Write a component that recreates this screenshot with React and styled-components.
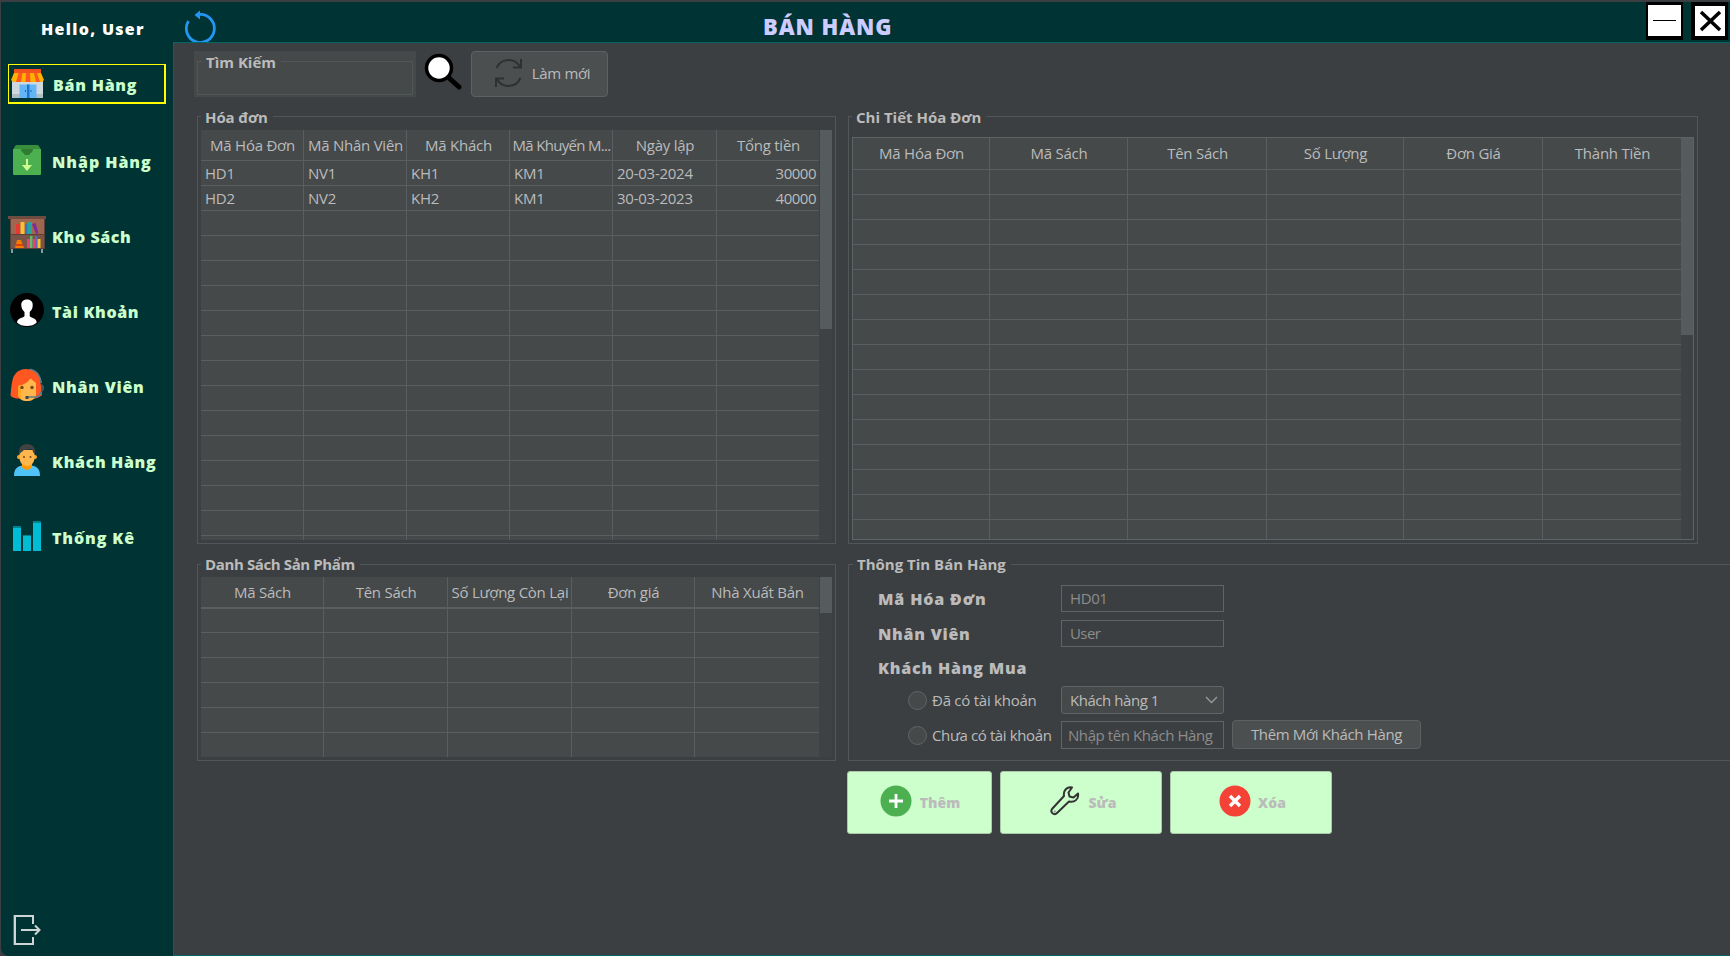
import React from "react";
import styled, { createGlobalStyle } from "styled-components";

const Global = createGlobalStyle`
  * { box-sizing: border-box; }
  body { margin: 0; background: #3c3f41; overflow: hidden; }
`;

const Window = styled.div`
  display: flex;
  width: 1730px;
  height: 956px;
  padding: 2px 0 0 1px;
  overflow: hidden;
  background: #3c3f41;
  color: #bbbbbb;
  font: 15px/20px "Open Sans", "Noto Sans", sans-serif;
`;

/* ---------- text ---------- */
const Text = styled.span`
  white-space: nowrap;
  letter-spacing: ${(p) => p.$ls || 0}px;
`;

const Heavy = styled(Text)`
  font-size: ${(p) => p.$size || 16}px;
  font-weight: 800;
`;

/* ---------- sidebar ---------- */
const Sidebar = styled.nav`
  display: flex;
  flex-direction: column;
  width: 172px;
  flex: none;
  padding: 0 6px 10px 7px;
  background: #003333;
  border-bottom-left-radius: 8px;
`;

const Greeting = styled(Heavy)`
  margin: 17px 0 25px 33px;
  color: #ffffff;
`;

const MenuItem = styled.a`
  display: flex;
  align-items: center;
  width: 158px;
  height: 40px;
  margin-bottom: ${(p) => (p.$active ? 37 : 35)}px;
  border: solid ${(p) => (p.$active ? "#ffff00" : "transparent")};
  border-width: 1px 2px 2px 1px;
  color: #ccffcc;

  &:nth-of-type(6) { margin-bottom: 36px; }
`;

const MenuLabel = styled(Heavy)`
  padding-top: 2px;
`;

const MenuIcon = styled.span`
  display: flex;
  justify-content: center;
  width: 38px;
  margin: 0 6px ${(p) => (p.$active ? 0 : 2)}px ${(p) => (p.$active ? 0 : -1)}px;
  flex: none;
  svg { display: block; flex: none; }
`;

const ExitButton = styled.a`
  margin: auto 0 0 4px;
  height: 32px;
  svg { display: block; }
`;

/* ---------- main ---------- */
const Main = styled.div`
  display: flex;
  flex-direction: column;
  flex: 1;
  min-width: 0;
`;

const Header = styled.header`
  display: flex;
  align-items: flex-start;
  height: 40px;
  padding: 0 2px 0 11px;
  background: #003333;
  overflow: hidden;
`;

const ReloadButton = styled.a`
  padding-top: 7px;
  svg { display: block; }
`;

const PageTitle = styled(Heavy)`
  margin: 9px auto 0 545px;
  line-height: 30px;
  color: #ccccff;
`;

const WindowButton = styled.button`
  width: 37px;
  height: 38px;
  margin-left: 8px;
  padding: 0;
  background: #ffffff;
  border: solid #000000;
  border-width: ${(p) => p.$edges};
  svg { display: block; }
`;

const Content = styled.main`
  flex: 1;
  padding: 8px 0 0 20px;
  border: solid #006666;
  border-width: 1px 0 1px 1px;
  overflow: hidden;
`;

const Toolbar = styled.div`
  display: flex;
  height: 46px;
`;

const SearchPanel = styled.div`
  width: 222px;
  height: 46px;
  padding: 0 3px 2px;
  background: #45494a;
`;

const Magnifier = styled.span`
  width: 39px;
  margin: 1px 8px 0 8px;
  svg { display: block; }
`;

const Group = styled.fieldset`
  min-width: 0;
  height: ${(p) => p.$h};
  width: ${(p) => p.$w || "auto"};
  margin: 0;
  padding: ${(p) => p.$pad || "0"};
  border: 1px solid #515658;
  overflow: visible;
`;

const Legend = styled.legend`
  height: 21px;
  margin-left: ${(p) => (p.$inset ? 0 : 4)}px;
  padding: ${(p) => (p.$low ? 2 : 1)}px 5px 0 4px;
  font-weight: 700;
  line-height: 18px;
  white-space: nowrap;
  letter-spacing: ${(p) => p.$ls || 0}px;
`;

const Button = styled.button`
  display: flex;
  align-items: center;
  justify-content: center;
  width: ${(p) => p.$w}px;
  height: ${(p) => p.$h}px;
  padding: 0 0 2px ${(p) => p.$shift || 0}px;
  gap: 10px;
  background: #4c4f50;
  border: 1px solid #5e6162;
  border-radius: 4px;
  color: #bbbbbb;
  font: inherit;
`;

const Panels = styled.div`
  display: grid;
  grid-template-columns: 639px 850px;
  grid-template-rows: 438px 207px;
  gap: 10px 12px;
  margin: 9px 0 0 3px;
`;

/* ---------- table ---------- */
const TableBox = styled.div`
  display: flex;
  height: ${(p) => p.$h}px;
  border: ${(p) => (p.$framed ? "1px solid #5e6364" : "0")};
  background: #45494a;
  overflow: hidden;
`;

const Grid = styled.div`
  display: grid;
  grid-template-columns: ${(p) => p.$cols.map((c) => c + "px").join(" ")};
  grid-template-rows: ${(p) => p.$head}px ${(p) => p.$first}px;
  grid-auto-rows: 25px;
  align-content: start;
`;

const Cell = styled.div`
  display: flex;
  align-items: center;
  justify-content: ${(p) => (p.$align === "right" ? "flex-end" : "flex-start")};
  padding: 0 3px 0 4px;
  border-right: ${(p) => (p.$last ? "0" : "1px solid #5a5e60")};
  border-bottom: 1px solid #5a5e60;
  overflow: hidden;
`;

const HeadCell = styled(Cell)`
  justify-content: center;
  padding: 0 0 ${(p) => (p.$raised ? 2 : 0)}px 1px;
  border-bottom-width: ${(p) => (p.$thick ? 2 : 1)}px;
`;

const Track = styled.div`
  width: 13px;
  flex: none;
  padding-left: ${(p) => (p.$inset ? 1 : 0)}px;
  background: #3f4244;
`;

const Thumb = styled.div`
  height: ${(p) => p.$h}px;
  background: #565b5e;
`;

/* ---------- form ---------- */
const Form = styled.div`
  display: grid;
  grid-template-columns: 183px 171px 189px;
  grid-template-rows: 27px 35px 31px 36px 35px;
  align-items: end;
  margin: 10px 0 0 29px;
`;

const FormLabel = styled(Heavy)`
  padding-bottom: ${(p) => (p.$low ? 0 : 3)}px;
`;

const Field = styled.div`
  display: flex;
  align-items: center;
  justify-content: space-between;
  width: 163px;
  height: ${(p) => p.$h || 27}px;
  padding: 0 8px 1px ${(p) => p.$pl || 8}px;
  border: 1px solid #616465;
  border-radius: ${(p) => (p.$select ? 3 : 0)}px;
  color: ${(p) => (p.$select ? "#bbbbbb" : "#8c8c8c")};
  background: ${(p) => (p.$select ? "#45494a" : "transparent")};
  svg { margin-right: -3px; }
`;

const RadioRow = styled.label`
  display: flex;
  align-items: center;
  height: 28px;
  padding-left: 30px;
  gap: 5px;
`;

const Radio = styled.span`
  width: 19px;
  height: 19px;
  flex: none;
  border: 1px solid #616465;
  border-radius: 50%;
  background: #45494a;
`;

const Actions = styled.div`
  display: flex;
  gap: 8px;
  margin: 10px 0 0 653px;
`;

const ActionButton = styled(Button)`
  gap: ${(p) => p.$gap}px;
  padding-bottom: 0;
  background: #ccffcc;
  border-color: #a8c8a8;
  border-radius: 3px;
  svg { flex: none; margin-bottom: 3px; }
`;

/* ---------- icons ---------- */
const StoreIcon = () => (
  <svg width="34" height="30" viewBox="0 0 34 30">
    <path d="M1 12h31v17H1z" fill="#cfd8dc" />
    <path d="M1 25h31v4H1z" fill="#b0bec5" />
    <path d="M8.500 15.500h17V29h-17z" fill="#64b5f6" />
    <path d="M16 15.500h2.500V29H16z" fill="#1976d2" />
    <path d="M14 21h1v2h-1zM19.500 21h1v2h-1z" fill="#1565c0" />
    <path d="M3 0h27v4H3z" fill="#f4511e" />
    <path d="M3 4h27l3 7-2 2H2l-2-2z" fill="#ffb300" />
    <path d="M7.500 4h4L10 13H5zM15 4h4l.5 9h-5zM23 4h3l3 9h-4z" fill="#ff5722" />
  </svg>
);

const BoxIcon = () => (
  <svg width="30" height="30" viewBox="0 0 30 30">
    <path d="M3 1Q4 0 5 0h20q1 0 2 1l2 4H1z" fill="#388e3c" />
    <path d="M1 4h28v25q0 1-1 1H2q-1 0-1-1z" fill="#4caf50" />
    <path d="M9 4h12q0 3-1.500 3.500Q18 8 17.500 9.500q-2.500 1-5 0Q12 8 10.500 7.500 9 7 9 4z" fill="#2e7d32" />
    <path d="M14 14h2v6h4l-5 6-5-6h4z" fill="#ccff90" />
  </svg>
);

const ShelfIcon = () => (
  <svg width="38" height="38" viewBox="0 0 38 38">
    <path d="M4 33v4M34 33v4" stroke="#b0bec5" strokeWidth="1.500" />
    <path d="M2 2h35v31H2z" fill="#5d4037" />
    <path d="M3 3h33v15H3z" fill="#a1664f" />
    <path d="M3 19h33v13H3z" fill="#795548" />
    <path d="M0 0h38v3H0z" fill="#6d4c41" />
    <path d="M8 8h4v10H8z" fill="#e53935" />
    <path d="M12.500 6h4v12h-4z" fill="#fbc02d" />
    <path d="M17 8h2.500v10H17z" fill="#3f6fc0" />
    <path d="M19.500 6H24v12h-4.500z" fill="#26a69a" />
    <path d="M24 8l3.500-1 3 10-2.500 1z" fill="#7b2f9b" />
    <path d="M9 24h4l3 8H7z" fill="#f57c00" />
    <path d="M8 28h7v2H8z" fill="#d84315" />
    <path d="M19 23h3v9h-3zM25 23h2v9h-2z" fill="#ec407a" />
    <path d="M22 20h2.500v12H22z" fill="#66bb6a" />
    <path d="M27 20h2v12h-2z" fill="#5c6bc0" />
    <path d="M29.500 23h3v9h-3z" fill="#fbc02d" />
  </svg>
);

const AccountIcon = () => (
  <svg width="34" height="34" viewBox="0 0 34 34">
    <circle cx="17" cy="17" r="17" fill="#000" />
    <path d="M17 6.500c4 0 6 2.500 5.700 6 0 3.500-1.500 5-3 6.500v4c1 2 7 2 7 6.500-2 2.500-6 3.500-9.700 3.500S9 32 7 29.500c0-4.500 6.500-4.500 7.500-6.500v-4c-1.500-1.500-3-3-3.200-6.500-.3-3.500 1.700-6 5.700-6z" fill="#fff" />
  </svg>
);

const AgentIcon = () => (
  <svg width="34" height="34" viewBox="0 0 34 34">
    <path d="M16 1C8 1 4 6 2.500 12 1 18 1 23 .5 27c0 1.500 2 2.500 6 3.500h19c3-1 6-2.500 6.500-3.500L30 10C28 4 22 1 16 1z" fill="#ff5722" />
    <path d="M20 1.200c6 .8 10 5.800 11.500 14" stroke="#607d8b" strokeWidth="1.500" fill="none" />
    <path d="M8 18c6-1 10-4 12.500-7.500L26 15v12c-1 4-4 6-9 6s-8-2-9-6z" fill="#ffb74d" />
    <path d="M8 18l3-1v14l-3-3z" fill="#ffa726" />
    <circle cx="12" cy="19.500" r="1.700" fill="#784719" />
    <circle cx="22" cy="19.500" r="1.700" fill="#784719" />
    <path d="M31 16q3 .5 3 4t-3 4z" fill="#455a64" />
    <path d="M31 24c-1 4-3 5-6 5h-8" stroke="#607d8b" strokeWidth="1.400" fill="none" />
    <path d="M15.500 28h3v3h-3z" fill="#37474f" />
  </svg>
);

const CustomerIcon = () => (
  <svg width="26" height="32" viewBox="0 0 26 32">
    <path d="M0 32c0-7 3-9.500 8-10.500h10c5 1 8 3.500 8 10.500z" fill="#4fc3f7" />
    <path d="M8 20h10v3q-2 3-5 3t-5-3z" fill="#ff9800" />
    <circle cx="5" cy="13" r="2" fill="#ffa726" />
    <circle cx="21" cy="13" r="2" fill="#ffa726" />
    <path d="M5.500 6h15v8c0 5-4 8-7.500 8s-7.500-3-7.500-8z" fill="#ffb74d" />
    <path d="M5 10C4 4 8 0 13 0c6 0 9 4 8 10l-1.500-1-1.500-4-8 1-3.500 3z" fill="#424242" />
    <circle cx="10" cy="13" r="1" fill="#784719" />
    <circle cx="16.500" cy="13" r="1" fill="#784719" />
  </svg>
);

const ChartIcon = () => (
  <svg width="30" height="30" viewBox="0 0 30 30">
    <path d="M1 6h8v24H1zM11 15h8v15h-8zM21 1h8v29h-8z" fill="#00bcd4" />
    <path d="M1 5h8v2H1zM11 14h8v1h-8zM21 0h8v2h-8z" fill="#00838f" />
  </svg>
);

const ExitIcon = () => (
  <svg width="30" height="32" viewBox="0 0 30 32" fill="none" stroke="#cfd4d4">
    <path d="M21 10V2H3v28h18v-7" strokeWidth="2" />
    <path d="M1.500 1v30" stroke="#4b6b6b" />
    <path d="M9 16h18" strokeWidth="2" />
    <path d="M23 11.500l4.500 4.500-4.500 4.500" strokeWidth="2" />
  </svg>
);

const ReloadIcon = () => (
  <svg width="34" height="34" viewBox="0 0 34 34">
    <path d="M4.500 12A14 14 0 1 0 15.500 5.500" stroke="#2196f3" strokeWidth="2.800" fill="none" />
    <path d="M10.500 6l5.500-4.500v9z" fill="#2196f3" />
  </svg>
);

const SearchIcon = () => (
  <svg width="40" height="40" viewBox="0 0 40 40">
    <path d="M24 25l11 10" stroke="#000" strokeWidth="5" strokeLinecap="round" />
    <circle cx="15" cy="16" r="12.500" fill="#fff" stroke="#000" strokeWidth="3.500" />
  </svg>
);

const SyncIcon = () => (
  <svg width="27" height="30" viewBox="0 0 27 30" fill="none" stroke="#2e3031" strokeWidth="2">
    <path d="M1.500 10C6 0 20-1 25 9M25.500 20C21 30 7 31 2 21" />
    <path d="M26 1v8.500h-8M1 29v-8.500h8" />
  </svg>
);

const ChevronIcon = () => (
  <svg width="13" height="8" viewBox="0 0 13 8" fill="none" stroke="#9a9da0" strokeWidth="1.300">
    <path d="M1 1l5.500 5.500L12 1" />
  </svg>
);

const AddIcon = () => (
  <svg width="32" height="32" viewBox="0 0 32 32">
    <circle cx="16" cy="16" r="15.500" fill="#4caf50" />
    <path d="M16 9v14M9 16h14" stroke="#fff" strokeWidth="2.800" />
  </svg>
);

const WrenchIcon = () => (
  <svg width="30" height="30" viewBox="0 0 30 30" fill="none" stroke="#333" strokeWidth="2" strokeLinejoin="round">
    <path d="M22 1.500c-5-1-9 3-8 8.500L2 23c-2 3 1.500 6.500 4.500 4.500L19 15.500c5.500 1.500 10-2.500 9-8l-4.500 4-4-1-1-4z" />
    <path d="M4.500 25.500h.8" />
  </svg>
);

const DeleteIcon = () => (
  <svg width="32" height="32" viewBox="0 0 32 32">
    <circle cx="16" cy="16" r="15.500" fill="#f44336" />
    <path d="M11 11l10 10M21 11L11 21" stroke="#fff" strokeWidth="3.400" />
  </svg>
);

/* ---------- data: label, icon, letter spacing ---------- */
const MENU = [
  ["Bán Hàng", StoreIcon, 0.75],
  ["Nhập Hàng", BoxIcon, 0.95],
  ["Kho Sách", ShelfIcon, 0.6],
  ["Tài Khoản", AccountIcon, 0.65],
  ["Nhân Viên", AgentIcon, 0.75],
  ["Khách Hàng", CustomerIcon, 0.65],
  ["Thống Kê", ChartIcon, 0.9],
];

function Table({ cols, head, headHeight, firstRow = 25, rows = [], count, height, thumb, framed }) {
  const cells = [];
  for (let r = 0; r < count; r++) {
    cols.forEach((_, c) => {
      const last = c === cols.length - 1;
      cells.push(
        <Cell key={r + "-" + c} $last={last} $align={last ? "right" : "left"}>
          {rows[r] && <Text $ls={last ? -0.5 : -0.25}>{rows[r][c]}</Text>}
        </Cell>
      );
    });
  }
  return (
    <TableBox $h={height} $framed={framed}>
      <Grid $cols={cols} $head={headHeight} $first={firstRow}>
        {head.map((h, i) => (
          <HeadCell key={h} $last={i === cols.length - 1} $raised={framed} $thick={firstRow < 25}>
            <Text $ls={h.endsWith("...") ? -0.7 : -0.25}>{h}</Text>
          </HeadCell>
        ))}
        {cells}
      </Grid>
      <Track $inset={!framed}>
        <Thumb $h={thumb} />
      </Track>
    </TableBox>
  );
}

export default function App() {
  return (
    <Window>
      <Global />
      <Sidebar>
        <Greeting $ls={1.3}>Hello, User</Greeting>
        {MENU.map(([label, Icon, ls], i) => (
          <MenuItem key={label} $active={i === 0}>
            <MenuIcon $active={i === 0}><Icon /></MenuIcon>
            <MenuLabel $ls={ls}>{label}</MenuLabel>
          </MenuItem>
        ))}
        <ExitButton><ExitIcon /></ExitButton>
      </Sidebar>
      <Main>
        <Header>
          <ReloadButton><ReloadIcon /></ReloadButton>
          <PageTitle $size={22} $ls={0.9}>BÁN HÀNG</PageTitle>
          <WindowButton $edges="3px 2px 4px 2px">
            <svg width="33" height="31" viewBox="0 0 33 31"><path d="M5 15h23v1H5z" fill="#000" /></svg>
          </WindowButton>
          <WindowButton $edges="4px 3px 4px 4px">
            <svg width="30" height="30" viewBox="0 0 30 30"><path d="M6 6l19 18M25 6L6 24" stroke="#000" strokeWidth="3.500" /></svg>
          </WindowButton>
        </Header>
        <Content>
          <Toolbar>
            <SearchPanel>
              <Group $h="44px"><Legend $low>Tìm Kiếm</Legend></Group>
            </SearchPanel>
            <Magnifier><SearchIcon /></Magnifier>
            <Button $w={137} $h={46} $shift={6}><SyncIcon /><Text $ls={-0.3}>Làm mới</Text></Button>
          </Toolbar>
          <Panels>
            <Group $h="438px" $pad="3px 3px 0">
              <Legend $inset $low $ls={-0.1}>Hóa đơn</Legend>
              <Table
                cols={[103, 103, 103, 103, 104, 102]}
                head={["Mã Hóa Đơn", "Mã Nhân Viên", "Mã Khách", "Mã Khuyến M...", "Ngày lập", "Tổng tiền"]}
                headHeight={31}
                rows={[
                  ["HD1", "NV1", "KH1", "KM1", "20-03-2024", "30000"],
                  ["HD2", "NV2", "KH2", "KM1", "30-03-2023", "40000"],
                ]}
                count={16}
                height={410}
                thumb={199}
              />
            </Group>
            <Group $h="438px" $pad="10px 3px 0">
              <Legend $inset $low>Chi Tiết Hóa Đơn</Legend>
              <Table
                cols={[137, 138, 139, 137, 139, 138]}
                head={["Mã Hóa Đơn", "Mã Sách", "Tên Sách", "Số Lượng", "Đơn Giá", "Thành Tiền"]}
                headHeight={32}
                count={15}
                height={403}
                thumb={197}
                framed
              />
            </Group>
            <Group $h="207px" $pad="2px 3px 0">
              <Legend $inset $ls={-0.38}>Danh Sách Sản Phẩm</Legend>
              <Table
                cols={[123, 124, 124, 123, 124]}
                head={["Mã Sách", "Tên Sách", "Số Lượng Còn Lại", "Đơn giá", "Nhà Xuất Bản"]}
                headHeight={32}
                firstRow={24}
                count={6}
                height={180}
                thumb={36}
              />
            </Group>
            <Group $h="207px" $w="900px">
              <Legend>Thông Tin Bán Hàng</Legend>
              <Form>
                <FormLabel $ls={0.85}>Mã Hóa Đơn</FormLabel>
                <Field><Text $ls={-0.4}>HD01</Text></Field>
                <span />
                <FormLabel $ls={0.75}>Nhân Viên</FormLabel>
                <Field><Text $ls={-0.6}>User</Text></Field>
                <span />
                <FormLabel $low $ls={0.8}>Khách Hàng Mua</FormLabel>
                <span />
                <span />
                <RadioRow><Radio /><Text $ls={-0.25}>Đã có tài khoản</Text></RadioRow>
                <Field $select $h={28}><Text $ls={-0.45}>Khách hàng 1</Text><ChevronIcon /></Field>
                <span />
                <RadioRow><Radio /><Text $ls={-0.38}>Chưa có tài khoản</Text></RadioRow>
                <Field $h={28} $pl={6}><Text $ls={-0.42}>Nhập tên Khách Hàng</Text></Field>
                <Button $w={189} $h={29}><Text $ls={-0.35}>Thêm Mới Khách Hàng</Text></Button>
              </Form>
            </Group>
          </Panels>
          <Actions>
            <ActionButton $w={145} $h={63} $gap={8} $shift={1}><AddIcon /><Heavy $size={14}>Thêm</Heavy></ActionButton>
            <ActionButton $w={162} $h={63} $gap={8} $shift={5}><WrenchIcon /><Heavy $size={14}>Sửa</Heavy></ActionButton>
            <ActionButton $w={162} $h={63} $gap={7} $shift={3}><DeleteIcon /><Heavy $size={14}>Xóa</Heavy></ActionButton>
          </Actions>
        </Content>
      </Main>
    </Window>
  );
}
